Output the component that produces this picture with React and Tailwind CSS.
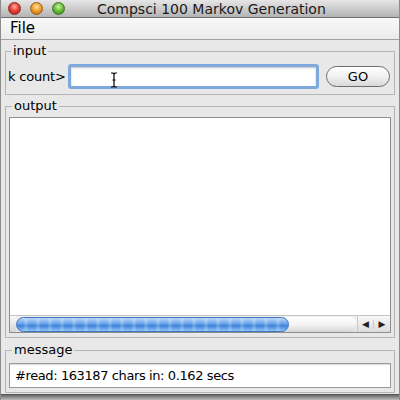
import React from "react";

function Light({ tone }) {
  const tones = {
    red: "bg-[radial-gradient(circle_at_50%_35%,#ffb0a8_0%,#e8443a_45%,#a4140c_100%)] border-[#8a2a22]",
    amber: "bg-[radial-gradient(circle_at_50%_35%,#ffe2a0_0%,#f0a030_45%,#b86208_100%)] border-[#93601c]",
    green: "bg-[radial-gradient(circle_at_50%_35%,#d2f5a8_0%,#6cc040_45%,#2f7c12_100%)] border-[#3e7424]",
  };
  return <span className={`block h-[13px] w-[13px] rounded-full border ${tones[tone]}`} />;
}

function Panel({ title, className = "", children }) {
  return (
    <fieldset className={`mx-[4px] border border-[#b6b6b6] ${className}`}>
      <legend className="ml-[3px] px-[2px] text-[13px] leading-[14px] text-black">{title}</legend>
      {children}
    </fieldset>
  );
}

function IBeam() {
  return (
    <svg className="absolute left-[109px] top-[72px]" width="8" height="16" viewBox="0 0 8 16">
      <path d="M1 1h2l1 1 1-1h2M4 2v12M1 15h2l1-1 1 1h2M2.5 8h3" stroke="#000" strokeWidth="1.2" fill="none" />
    </svg>
  );
}

export default function App() {
  return (
    <div className="relative flex h-[400px] w-[400px] flex-col overflow-hidden border-x border-[#8c8c8c] bg-[#e8e8e8] font-['DejaVu_Sans',sans-serif] text-black">
      <div className="flex h-[18px] shrink-0 items-center border-b border-[#6f6f6f] bg-gradient-to-b from-[#e6e6e6] to-[#b4b4b4] pl-[7px]">
        <div className="flex gap-[9px]">
          <Light tone="red" />
          <Light tone="amber" />
          <Light tone="green" />
        </div>
        <span className="ml-[32px] text-[14px] leading-none text-[#1a1a1a]">Compsci 100 Markov Generation</span>
      </div>

      <div className="flex h-[22px] shrink-0 items-center border-b border-[#a2a2a2] bg-gradient-to-b from-[#f9f9f9] to-[#ebebeb] pl-[9px]">
        <span className="text-[15px] leading-none">File</span>
      </div>

      <Panel title="input" className="mt-[4px] px-[2px] pb-[5px] pt-[6px]">
        <div className="flex items-center">
          <span className="w-[60px] text-[13px] leading-none tracking-[-0.2px]">k count&gt;</span>
          <div className="h-[25px] w-[251px] rounded-[3px] border-[3px] border-[#7fa9dc] bg-white shadow-[inset_0_1px_2px_rgba(0,0,0,0.25)]" />
          <button className="ml-[7px] flex h-[21px] w-[64px] items-center justify-center rounded-full border border-[#6e6e6e] bg-gradient-to-b from-[#ffffff] via-[#f1f1f1] to-[#d9d9d9] text-[13px] leading-none">
            GO
          </button>
        </div>
      </Panel>

      <Panel title="output" className="mt-[4px] px-[3px] pb-[4px] pt-[4px]">
        <div className="flex h-[216px] flex-col border border-[#8e8e8e] bg-white">
          <div className="flex-1" />
          <div className="flex h-[17px] items-center border-t border-[#c4c4c4] bg-gradient-to-b from-[#f2f2f2] to-[#e2e2e2]">
            <div className="h-full w-[6px] bg-gradient-to-b from-[#fafafa] to-[#d4d4d4]" />
            <div className="flex h-[15px] flex-1 items-center rounded-full bg-gradient-to-b from-[#ffffff] via-[#f4f4f4] to-[#d6d6d6]">
              <div className="h-[15px] w-[273px] rounded-full border border-[#3d73c0] bg-[repeating-linear-gradient(90deg,rgba(255,255,255,0)_0px,rgba(255,255,255,0)_6px,rgba(255,255,255,0.25)_9px,rgba(255,255,255,0)_12px),linear-gradient(180deg,#bcd8f6_0%,#6ea8ea_40%,#3c82dc_60%,#8ec2f4_100%)]" />
            </div>
            <div className="flex h-full w-[33px] items-center border-l border-[#c9c9c9] bg-gradient-to-b from-[#f8f8f8] to-[#dcdcdc] text-[9px] leading-none text-[#222]">
              <span className="flex w-[16px] justify-center border-r border-[#c9c9c9]">◀</span>
              <span className="flex w-[16px] justify-center">▶</span>
            </div>
          </div>
        </div>
      </Panel>

      <Panel title="message" className="mt-[5px] px-[3px] pb-[4px] pt-[6px]">
        <div className="flex h-[25px] items-center border border-[#9a9a9a] bg-white pl-[5px] shadow-[inset_0_1px_1px_rgba(0,0,0,0.15)]">
          <span className="text-[13px] leading-none tracking-[-0.4px]">#read: 163187 chars in: 0.162 secs</span>
        </div>
      </Panel>

      <div className="mt-[1px] flex-1 border-t border-[#555] bg-gradient-to-b from-[#6a6a6a] to-[#bdbdbd]" />

      <IBeam />
    </div>
  );
}
